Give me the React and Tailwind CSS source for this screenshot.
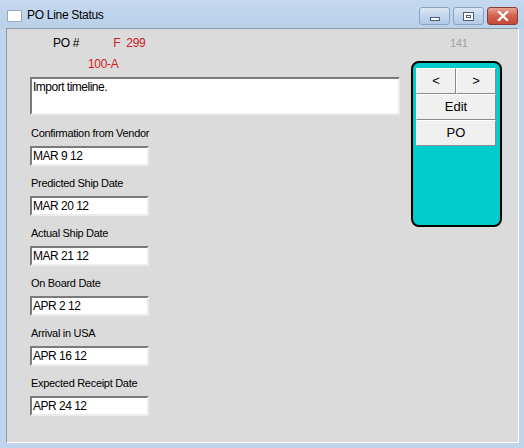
import React from "react";

const fields = [
    { label: "Confirmation from Vendor", value: "MAR 9 12" },
    { label: "Predicted Ship Date", value: "MAR 20 12" },
    { label: "Actual Ship Date", value: "MAR 21 12" },
    { label: "On Board Date", value: "APR 2 12" },
    { label: "Arrival in USA", value: "APR 16 12" },
    { label: "Expected Receipt Date", value: "APR 24 12" },
];

const sunken =
    "bg-white border-2 border-t-[#7a7a7a] border-l-[#7a7a7a] border-r-[#ececec] border-b-[#ececec]";

const raised =
    "bg-[#f0f0f0] border border-t-white border-l-white border-r-[#8a8a8a] border-b-[#8a8a8a] flex items-center justify-center text-[13px] tracking-normal text-black";

function CaptionButton({ kind }) {
    if (kind === "close") {
        return (
            <div className="w-[31px] h-[18px] rounded-[3px] border border-[#8c3b3b] bg-gradient-to-b from-[#e8a191] via-[#d1604c] to-[#c24a38] flex items-center justify-center">
                <svg width="12" height="10" viewBox="0 0 12 10">
                    <path d="M2 1 L10 9 M10 1 L2 9" stroke="#ffffff" strokeWidth="2.4" strokeLinecap="square" />
                </svg>
            </div>
        );
    }
    return (
        <div className="w-[31px] h-[18px] rounded-[3px] border border-[#8aa3c2] bg-gradient-to-b from-[#dbe7f5] via-[#c3d5ec] to-[#b3c9e6] flex items-center justify-center">
            {kind === "min" ? (
                <div className="w-[10px] h-[4px] mt-[5px] border border-[#4d5f78] bg-white" />
            ) : (
                <div className="w-[11px] h-[9px] border border-[#4d5f78] bg-white flex items-center justify-center">
                    <div className="w-[5px] h-[3px] border border-[#4d5f78]" />
                </div>
            )}
        </div>
    );
}

export default function App() {
    return (
        <div
            className="w-[524px] h-[448px] bg-[#bfd5ed] flex flex-col overflow-hidden"
            style={{ fontFamily: '"Liberation Sans", Arial, sans-serif' }}
        >
            {/* title bar */}
            <div className="h-[28px] flex items-start bg-gradient-to-b from-[#c4d8ef] to-[#bad1ea]">
                <div className="ml-[7px] mt-[10px] w-[15px] h-[12px] bg-white border border-[#9aa9bb]" />
                <span className="ml-[5px] mt-[8px] text-[12px] tracking-[-0.3px] leading-[15px] text-black">PO Line Status</span>
                <div className="flex-1" />
                <div className="flex gap-[3px] mt-[7px] mr-[6px]">
                    <CaptionButton kind="min" />
                    <CaptionButton kind="max" />
                    <CaptionButton kind="close" />
                </div>
            </div>

            {/* client area */}
            <div className="ml-[6px] w-[513px] h-[415px] bg-[#dcdbdb] border border-t-[#8f9aa8] border-l-[#8f9aa8] border-r-white border-b-white flex text-[11px] tracking-[-0.3px] text-black">
                <div className="w-[394px] pl-[23px] flex flex-col">
                    <div className="h-[13px] mt-[8px] leading-[13px] flex text-[12px]">
                        <span className="ml-[23px]">PO #</span>
                        <span className="ml-[34px] text-[#d0201c] whitespace-pre">F  299</span>
                    </div>
                    <div className="h-[13px] mt-[8px] leading-[13px] ml-[58px] text-[12px] text-[#d0201c]">100-A</div>
                    <div className={`${sunken} mt-[6px] w-[370px] h-[38px] px-[1px] pt-[1px] leading-[14px] text-[12px] tracking-[-0.5px]`}>
                        Import timeline.
                    </div>
                    {fields.map((f, i) => (
                        <div key={f.label} className={`flex flex-col ${i === 0 ? "mt-[11px]" : "mt-[10px]"}`}>
                            <div className="h-[14px] leading-[14px] ml-[1px]">{f.label}</div>
                            <div className={`${sunken} mt-[6px] w-[119px] h-[20px] px-[1px] leading-[16px] text-[12px] tracking-[-0.5px]`}>
                                {f.value}
                            </div>
                        </div>
                    ))}
                </div>

                <div className="ml-[10px] flex flex-col">
                    <div className="h-[13px] mt-[8px] leading-[13px] ml-[39px] text-[11px] text-[#a0a0a0]">141</div>
                    <div className="mt-[11px] w-[91px] h-[166px] rounded-[8px] border-2 border-black bg-[#00cccc] pl-[3px] pt-[5px]">
                        <div className="flex w-[80px]">
                            <div className={`${raised} w-[40px] h-[26px]`}>&lt;</div>
                            <div className={`${raised} w-[40px] h-[26px]`}>&gt;</div>
                        </div>
                        <div className={`${raised} w-[80px] h-[26px]`}>Edit</div>
                        <div className={`${raised} w-[80px] h-[26px]`}>PO</div>
                    </div>
                </div>
            </div>
        </div>
    );
}
